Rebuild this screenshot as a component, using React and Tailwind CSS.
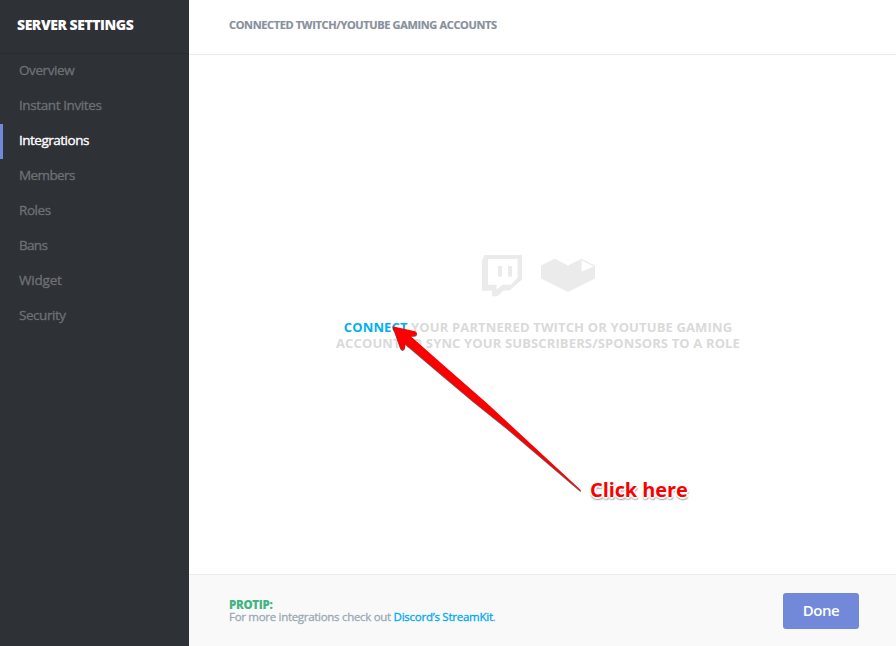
const NAV_ITEMS = [
  { label: 'Overview', spacing: 'tracking-[-0.4px]' },
  { label: 'Instant Invites', spacing: 'tracking-[-0.4px]' },
  { label: 'Integrations', spacing: 'tracking-[-0.5px]', active: true },
  { label: 'Members', spacing: 'tracking-[-0.6px]' },
  { label: 'Roles', spacing: 'tracking-[-0.45px]' },
  { label: 'Bans', spacing: 'tracking-[-0.7px]' },
  { label: 'Widget', spacing: 'tracking-[-0.2px]' },
  { label: 'Security', spacing: 'tracking-[-0.45px]' },
];

function Sidebar() {
  return (
    <aside className="flex w-[189px] shrink-0 flex-col bg-[#2e3136]">
      <h1 className="flex h-[54px] items-center border-b border-[#292b30] pb-1 pl-[17px] text-[14px] font-extrabold tracking-[-0.45px] whitespace-nowrap text-white">
        SERVER SETTINGS
      </h1>
      <nav className="flex flex-col">
        {NAV_ITEMS.map(({ label, spacing, active }) => (
          <a
            key={label}
            className={`flex h-[35px] items-center border-l-[3px] pl-4 pb-0.5 text-[13.5px] whitespace-nowrap [-webkit-text-stroke:0.35px_currentColor] ${spacing} ${
              active ? 'border-[#7289da] text-white' : 'border-transparent text-[#6d6f73]'
            }`}
          >
            {label}
          </a>
        ))}
      </nav>
    </aside>
  );
}

function PlatformIcons() {
  return (
    <svg className="-ml-2" width="114" height="42" viewBox="482 255 114 42" fill="#ebebeb">
      <path
        fillRule="evenodd"
        d="M484.5 255H522V279.5L509.5 290.5H503.5L497.5 296.3H492V290.7H482V260.7ZM488 259V284.7H496.5V289.7L502.5 284.7H511L517.6 277.5V259ZM498 266H502V276.7H498ZM508 266H512V276.7H508Z"
      />
      <path
        fillRule="evenodd"
        d="M541 265.4L554.6 258.7L568 265.4L581.5 258.7L595 265.5V278.6L568 292L541 278.6ZM581.6 260.2V271.7L593.5 266.5Z"
      />
    </svg>
  );
}

function Arrow() {
  return (
    <svg
      className="pointer-events-none absolute top-[320px] left-[385px] drop-shadow-[0_1px_0.7px_rgba(0,0,0,0.6)]"
      width="202"
      height="178"
      viewBox="385 320 202 178"
    >
      <path
        d="M392.5 326.2L415 331.2Q417.3 332 416.9 334Q416.5 335.8 414.5 335.7L410.5 336L443 364.7L487 403.2L581 490.2L580.4 490.9L507 428.6L473 401.2L440 373.6L405.3 344L405 347.8Q404.3 349.8 402.5 349.9Q400.7 349.8 400.2 348Z"
        fill="#fb0000"
      />
    </svg>
  );
}

export default function App() {
  return (
    <div className="relative flex h-[646px] w-[896px] overflow-hidden bg-white font-['Open_Sans','Noto_Sans',sans-serif]">
      <Sidebar />
      <main className="flex flex-1 flex-col">
        <header className="flex h-[55px] items-center border-b border-[#ebebeb] pb-1 pl-10">
          <h2 className="text-[11px] font-bold tracking-[-0.35px] whitespace-nowrap text-[#87909c] [-webkit-text-stroke:0.2px_currentColor]">
            CONNECTED TWITCH/YOUTUBE GAMING ACCOUNTS
          </h2>
        </header>
        <section className="flex flex-1 flex-col items-center pt-[200px]">
          <PlatformIcons />
          <p className="mt-[22px] ml-[-9px] text-center text-[13px] leading-4 font-bold tracking-[0.13px] whitespace-nowrap text-[#dadada]">
            <a className="text-[#00b0f4]">CONNECT</a> YOUR PARTNERED TWITCH OR YOUTUBE GAMING
            <br />
            ACCOUNT TO SYNC YOUR SUBSCRIBERS/SPONSORS TO A ROLE
          </p>
        </section>
        <footer className="flex h-[72px] items-center justify-between border-t border-[#ebebeb] bg-[#f9f9f9] pr-[37px] pl-10">
          <div className="text-[11.5px] leading-3 whitespace-nowrap">
            <div className="font-extrabold tracking-[-0.3px] text-[#43b581]">PROTIP:</div>
            <p className="tracking-[-0.3px] text-[#99aab5] [-webkit-text-stroke:0.3px_currentColor]">
              For more integrations check out{' '}
              <a className="tracking-[-0.25px] text-[#00a8f5]">Discord’s StreamKit</a>.
            </p>
          </div>
          <button className="h-9 w-[76px] rounded-[3px] bg-[#7289da] text-[15px] font-semibold tracking-[-0.5px] text-white">
            Done
          </button>
        </footer>
      </main>
      <Arrow />
      <div className="absolute top-[477px] left-[590px] text-[20px] leading-[26px] font-bold tracking-[-0.1px] whitespace-nowrap text-[#fb0000] [text-shadow:-1px_-1px_0_#fff,1px_-1px_0_#fff,-1px_1px_0_#fff,1px_1px_0_#fff,2px_0_0_#fff,-2px_0_0_#fff,0_2px_0_#fff,0_2px_2px_#444,1px_2px_2px_#777]">
        Click here
      </div>
    </div>
  );
}
